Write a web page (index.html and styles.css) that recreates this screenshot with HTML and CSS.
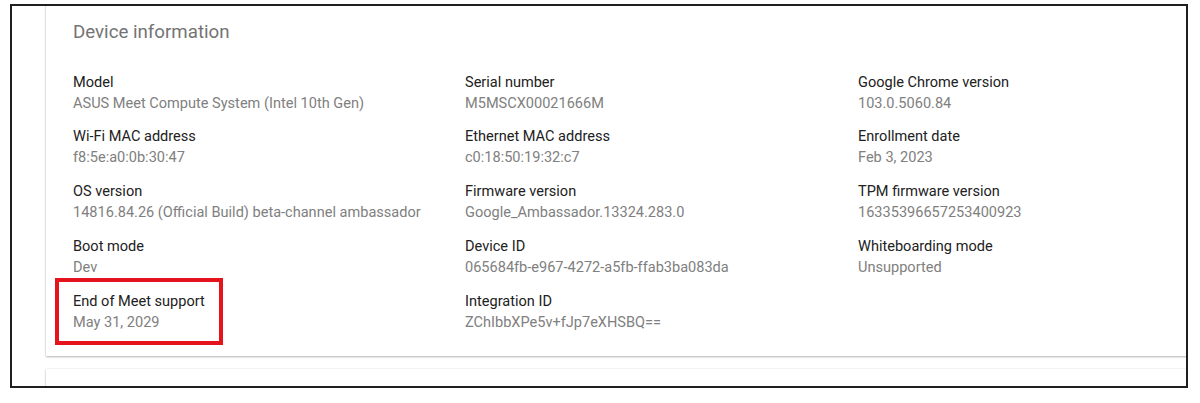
FILE: index.html
```html
<!DOCTYPE html>
<html>
<head>
<meta charset="utf-8">
<link rel="stylesheet" href="styles.css">
</head>
<body>
<div class="frame">
  <section class="card">
    <h2 class="title">Device information</h2>
    <div class="grid">
      <div class="item"><div class="label">Model</div><div class="value">ASUS Meet Compute System (Intel 10th Gen)</div></div>
      <div class="item"><div class="label">Serial number</div><div class="value">M5MSCX00021666M</div></div>
      <div class="item"><div class="label">Google Chrome version</div><div class="value">103.0.5060.84</div></div>
      <div class="item"><div class="label">Wi-Fi MAC address</div><div class="value">f8:5e:a0:0b:30:47</div></div>
      <div class="item"><div class="label">Ethernet MAC address</div><div class="value">c0:18:50:19:32:c7</div></div>
      <div class="item"><div class="label">Enrollment date</div><div class="value">Feb 3, 2023</div></div>
      <div class="item"><div class="label">OS version</div><div class="value">14816.84.26 (Official Build) beta-channel ambassador</div></div>
      <div class="item"><div class="label">Firmware version</div><div class="value">Google_Ambassador.13324.283.0</div></div>
      <div class="item"><div class="label">TPM firmware version</div><div class="value">16335396657253400923</div></div>
      <div class="item"><div class="label">Boot mode</div><div class="value">Dev</div></div>
      <div class="item"><div class="label">Device ID</div><div class="value">065684fb-e967-4272-a5fb-ffab3ba083da</div></div>
      <div class="item"><div class="label">Whiteboarding mode</div><div class="value">Unsupported</div></div>
      <div class="item highlighted"><div class="label">End of Meet support</div><div class="value">May 31, 2029</div><div class="callout"></div></div>
      <div class="item"><div class="label">Integration ID</div><div class="value">ZChIbbXPe5v+fJp7eXHSBQ==</div></div>
    </div>
  </section>
  <section class="card next"></section>
</div>
</body>
</html>
```

FILE: styles.css
```css
html, body {
  margin: 0;
  padding: 0;
  background: #ffffff;
}

body {
  font-family: Roboto, "Noto Sans", "Liberation Sans", sans-serif;
}

.frame {
  box-sizing: border-box;
  margin: 4px 0 0 10px;
  width: 1178px;
  height: 384px;
  border: 2px solid #1f1f1f;
  overflow: hidden;
  padding-left: 34px;
}

.card {
  background: #ffffff;
  box-shadow: 0 1px 2px rgba(0, 0, 0, 0.28), 0 0 1px rgba(0, 0, 0, 0.18);
  margin-top: -8px;
  margin-right: -1px;
  padding: 22px 0 23px 27px;
}

.title {
  margin: 0;
  font-size: 18.7px;
  font-weight: 400;
  line-height: 24px;
  color: #747474;
}

.grid {
  margin-top: 27.5px;
  display: grid;
  grid-template-columns: 392px 393px 1fr;
  row-gap: 12.75px;
}

.item {
  position: relative;
}

.label {
  font-size: 14.55px;
  line-height: 21px;
  color: #212121;
}

.value {
  font-size: 14.55px;
  line-height: 21px;
  color: #808080;
}

.callout {
  position: absolute;
  left: -18px;
  top: -12.5px;
  width: 168px;
  height: 67px;
  box-sizing: border-box;
  border: 4px solid #e5131b;
}

.card.next {
  margin-top: 13px;
  height: 40px;
  padding: 0;
}
```
